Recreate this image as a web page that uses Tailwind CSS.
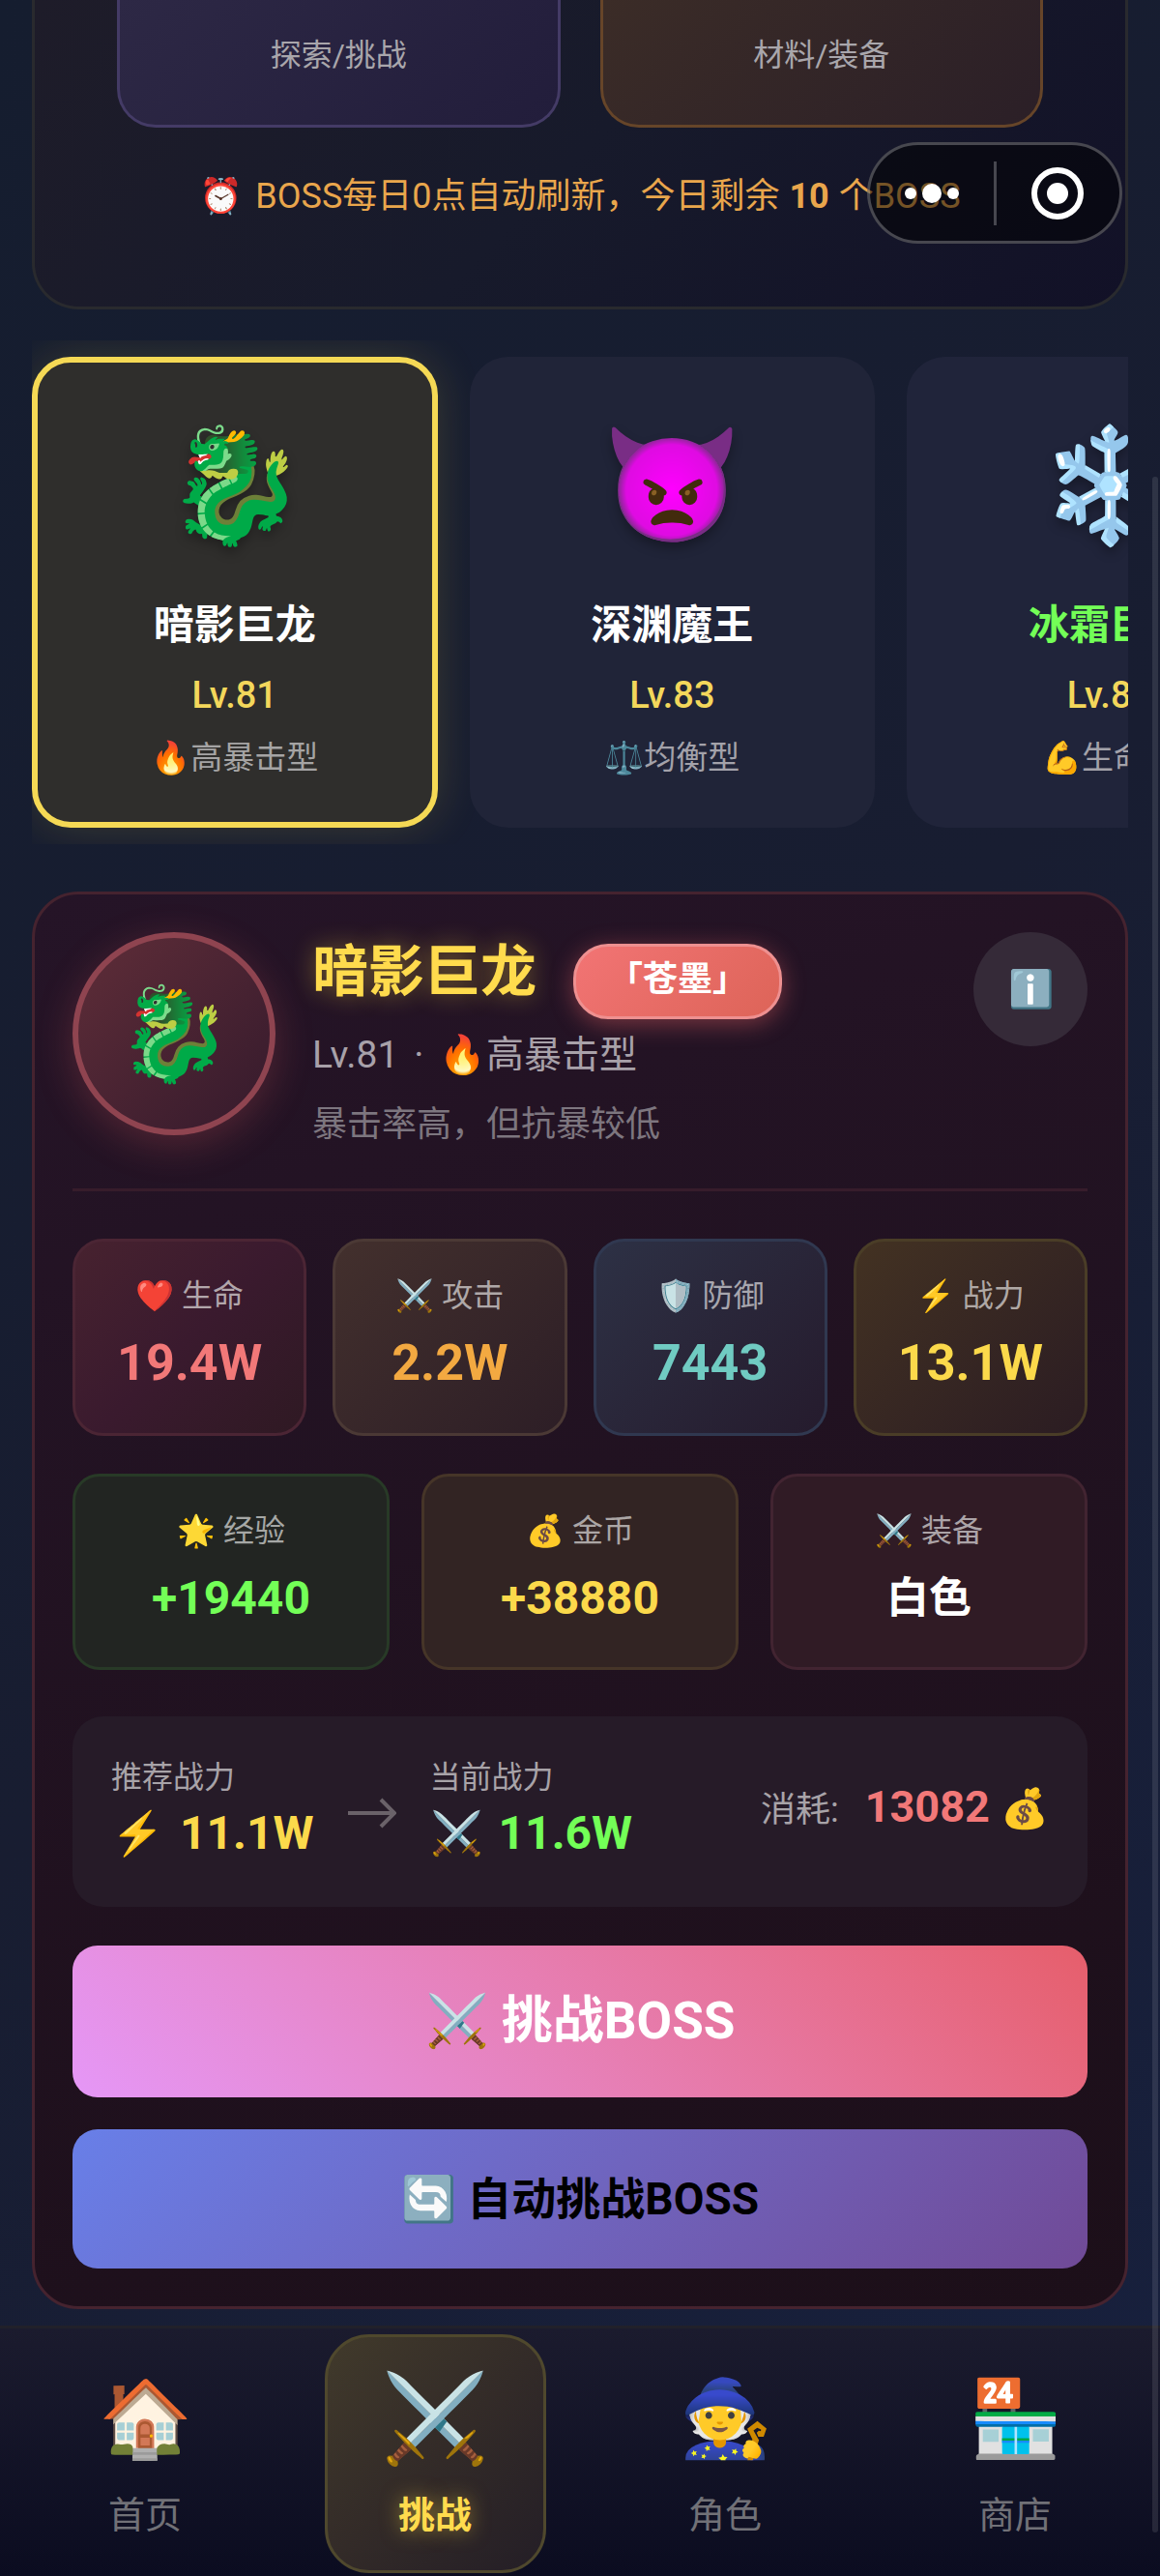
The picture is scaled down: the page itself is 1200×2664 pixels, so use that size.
<!DOCTYPE html>
<html lang="zh-CN">
<head>
  <meta charset="UTF-8">
  <meta name="viewport" content="width=device-width, initial-scale=1">
  <title>挑战BOSS</title>
  <script src="https://cdn.jsdelivr.net/npm/@tailwindcss/browser@4"></script>
</head>
<body class="relative min-h-screen overflow-x-hidden flex flex-col bg-linear-135 from-[#151d2f] via-[#181d31] to-[#17203e] font-['Roboto','Noto_Sans_CJK_SC',sans-serif] text-white">

  <main class="px-[33px]">
    <!-- 每日刷新 -->
    <section class="rounded-b-[48px] border-3 border-t-0 border-[#292a2e] bg-linear-135 from-[#1e1c29] via-[#171a2b] to-[#121127] px-[85px] pb-[89px]">
      <div class="grid grid-cols-2 gap-[41px] text-center text-[32px] leading-[50px] text-[#a9a6ab]">
        <div class="rounded-b-[40px] border-3 border-t-0 border-[#443b66] bg-linear-135 from-[#2d2845] to-[#221d3b] pt-8 pb-[47px]">探索/挑战</div>
        <div class="rounded-b-[40px] border-3 border-t-0 border-[#664529] bg-linear-135 from-[#3b2c27] to-[#2b1f27] pt-8 pb-[47px]">材料/装备</div>
      </div>
      <p class="mt-[46px] whitespace-nowrap text-center text-[36px] leading-[50px] text-[#e9a64c]"><span class="mr-1">⏰</span> BOSS每日0点自动刷新，今日剩余 <b class="mx-px">10</b> 个BOSS</p>
    </section>

    <!-- BOSS 列表 -->
    <section class="mt-8 flex gap-[33px] overflow-hidden py-[17px] text-center">
      <button type="button" class="shrink-0 basis-[37%] rounded-[40px] border-6 border-[#f5d955] bg-[#2f2e2c] pt-[47px] pb-[46px] shadow-[0_0_48px_rgba(255,217,61,0.16)]">
        <span class="block text-[116px] leading-[160px] text-shadow-[0_6px_12px_rgba(0,0,0,0.3)]">🐉</span>
        <span class="mt-[35px] block text-[42px] leading-[60px] font-bold">暗影巨龙</span>
        <span class="mt-[17px] block text-[38px] leading-[50px] font-medium text-[#f3d75b]">Lv.81</span>
        <span class="mt-5 block text-[33px] leading-[40px] text-[#a5a4a4]">🔥高暴击型</span>
      </button>
      <button type="button" class="shrink-0 basis-[37%] rounded-[40px] border-6 border-transparent bg-[#202438] bg-clip-border pt-[47px] pb-[46px]">
        <span class="block text-[116px] leading-[160px] text-shadow-[0_6px_12px_rgba(0,0,0,0.3)]">👿</span>
        <span class="mt-[35px] block text-[42px] leading-[60px] font-bold">深渊魔王</span>
        <span class="mt-[17px] block text-[38px] leading-[50px] font-medium text-[#f3d75b]">Lv.83</span>
        <span class="mt-5 block text-[33px] leading-[40px] text-[#a3a2aa]">⚖️均衡型</span>
      </button>
      <button type="button" class="shrink-0 basis-[37%] rounded-[40px] border-6 border-transparent bg-[#20243a] bg-clip-border pt-[47px] pb-[46px]">
        <span class="block text-[116px] leading-[160px] text-shadow-[0_6px_12px_rgba(0,0,0,0.3)]">❄️</span>
        <span class="mt-[35px] block text-[42px] leading-[60px] font-bold text-[#73ff57]">冰霜巨人</span>
        <span class="mt-[17px] block text-[38px] leading-[50px] font-medium text-[#f3d75b]">Lv.85</span>
        <span class="mt-5 block text-[33px] leading-[40px] text-[#a3a2aa]">💪生命型</span>
      </button>
    </section>

    <!-- BOSS 详情 -->
    <section class="mt-[49px] rounded-[48px] border-3 border-[#45232f] bg-linear-160 from-[#251427] to-[#1c0f19] p-[39px]">
      <header class="flex items-start gap-[38px] border-b-3 border-[#371c2b] pb-[41px]">
        <div class="flex size-[210px] shrink-0 items-center justify-center rounded-full border-6 border-[#8f4450] bg-linear-135 from-[#5f2d38] to-[#351a2c] text-[95px] leading-none shadow-[0_10px_40px_rgba(255,107,107,0.22)]">🐉</div>
        <div class="grow pt-3">
          <div class="flex items-start gap-[38px]">
            <h2 class="text-[58px] leading-[58px] font-bold text-[#ffdb4d] text-shadow-[0_0_24px_rgba(255,217,61,0.4)]">暗影巨龙</h2>
            <span class="rounded-[36px] border-3 border-[#ee9090] bg-linear-135 from-[#f27474] to-[#dd6458] px-[33px] pb-1 text-[36px] leading-[68px] font-bold shadow-[0_5px_24px_rgba(255,107,107,0.4)]">「苍墨」</span>
          </div>
          <p class="mt-3 text-[39px] leading-[50px] text-[#a8a1a9]">Lv.81 <span class="mx-1.5">·</span> 🔥高暴击型</p>
          <p class="mt-[22px] text-[36px] leading-[50px] text-[#7d767f]">暴击率高，但抗暴较低</p>
        </div>
        <button type="button" aria-label="详情" class="size-[118px] shrink-0 rounded-full bg-[#352a38] text-[38px] leading-[118px]">ℹ️</button>
      </header>

      <div class="mt-[49px] grid grid-cols-4 gap-[27px] text-center">
        <div class="rounded-[32px] border-3 border-[#4b2534] bg-linear-135 from-[#47222f] via-[#3a1a2e] to-[#2f1923] pt-9 pb-[42px]">
          <p class="text-[32px] leading-[40px] text-[#b2a6ab]">❤️ 生命</p>
          <p class="mt-5 text-[52px] leading-[60px] font-bold text-[#f27878]">19.4W</p>
        </div>
        <div class="rounded-[32px] border-3 border-[#4b3935] bg-linear-135 from-[#43302d] to-[#2d1e26] pt-9 pb-[42px]">
          <p class="text-[32px] leading-[40px] text-[#afa8a8]">⚔️ 攻击</p>
          <p class="mt-5 text-[52px] leading-[60px] font-bold text-[#f3a941]">2.2W</p>
        </div>
        <div class="rounded-[32px] border-3 border-[#303850] bg-linear-135 from-[#2d3145] to-[#251b2d] pt-9 pb-[42px]">
          <p class="text-[32px] leading-[40px] text-[#a7a6ae]">🛡️ 防御</p>
          <p class="mt-5 text-[52px] leading-[60px] font-bold text-[#70cbc2]">7443</p>
        </div>
        <div class="rounded-[32px] border-3 border-[#4a3d27] bg-linear-135 from-[#433222] to-[#2b1c22] pt-9 pb-[42px]">
          <p class="text-[32px] leading-[40px] text-[#afa8a5]">⚡ 战力</p>
          <p class="mt-5 text-[52px] leading-[60px] font-bold text-[#fbd94b]">13.1W</p>
        </div>
      </div>

      <div class="mt-[39px] grid grid-cols-3 gap-[33px] text-center">
        <div class="rounded-[28px] border-3 border-[#283a27] bg-[#222522] pt-9 pb-[41px]">
          <p class="text-[32px] leading-[40px] text-[#a5a7a5]">🌟 经验</p>
          <p class="mt-5 text-[48px] leading-[60px] font-bold text-[#73ff57]">+19440</p>
        </div>
        <div class="rounded-[28px] border-3 border-[#463528] bg-[#322423] pt-9 pb-[41px]">
          <p class="text-[32px] leading-[40px] text-[#aba6a5]">💰 金币</p>
          <p class="mt-5 text-[48px] leading-[60px] font-bold text-[#fbd94b]">+38880</p>
        </div>
        <div class="rounded-[28px] border-3 border-[#422431] bg-[#301b25] pt-9 pb-[41px]">
          <p class="text-[32px] leading-[40px] text-[#aba3a7]">⚔️ 装备</p>
          <p class="mt-5 text-[44px] leading-[60px] font-bold">白色</p>
        </div>
      </div>

      <div class="mt-12 flex items-center rounded-[32px] bg-[#261b28] px-10 pt-10 pb-[46px]">
        <div>
          <p class="text-[32px] leading-[46px] text-[#a8a3a8]">推荐战力</p>
          <p class="mt-[5px] flex items-center gap-4 text-[48px] leading-[60px] font-bold text-[#fbd94b]"><span class="text-[44px]">⚡</span>11.1W</p>
        </div>
        <svg class="mx-[35px] mt-2 w-[50px] shrink-0" viewBox="0 0 50 32" fill="none" stroke="#6a6269" stroke-width="4"><path d="M0 16H47M34 2L48 16L34 30"/></svg>
        <div>
          <p class="text-[32px] leading-[46px] text-[#a8a3a8]">当前战力</p>
          <p class="mt-[5px] flex items-center gap-4 text-[48px] leading-[60px] font-bold text-[#73ff57]"><span class="text-[44px]">⚔️</span>11.6W</p>
        </div>
        <p class="ml-auto text-[36px] leading-[60px] text-[#a8a3a8]">消耗: <b class="ml-[18px] text-[45px] text-[#f27878]">13082 <span class="text-[40px]">💰</span></b></p>
      </div>

      <button type="button" class="mt-10 block h-[157px] w-full rounded-[26px] bg-linear-45 from-[#e597f7] to-[#e65e6b] text-[53px] font-bold">⚔️ 挑战BOSS</button>
      <button type="button" class="mt-[33px] block h-36 w-full rounded-[26px] bg-linear-135 from-[#687fe8] to-[#704a97] text-[46px] font-bold text-black">🔄 自动挑战BOSS</button>
    </section>
  </main>

  <!-- 底部导航 -->
  <nav class="mt-[17px] grid grid-cols-4 justify-items-center border-t-3 border-[#21212a] bg-linear-to-b from-[#1b1b2e] to-[#0b0c20] pt-[6px] pb-1 text-center text-[38px] leading-[50px] text-[#717177]">
    <a href="#" class="w-[229px] rounded-[46px] border-3 border-transparent pt-[25px] pb-8">
      <span class="block text-[78px] leading-[120px]">🏠</span>
      <span class="mt-[14px] block">首页</span>
    </a>
    <a href="#" aria-current="page" class="w-[229px] rounded-[46px] border-3 border-[#4f482d] bg-linear-135 from-[#413a2b] via-[#332b28] to-[#241e26] pt-[25px] pb-8">
      <span class="block text-[90px] leading-[120px]">⚔️</span>
      <span class="mt-[14px] block font-bold text-[#ffdb4d] text-shadow-[0_0_20px_rgba(255,217,61,0.5)]">挑战</span>
    </a>
    <a href="#" class="w-[229px] rounded-[46px] border-3 border-transparent pt-[25px] pb-8">
      <span class="block text-[78px] leading-[120px]">🧙</span>
      <span class="mt-[14px] block">角色</span>
    </a>
    <a href="#" class="w-[229px] rounded-[46px] border-3 border-transparent pt-[25px] pb-8">
      <span class="block text-[78px] leading-[120px]">🏪</span>
      <span class="mt-[14px] block">商店</span>
    </a>
  </nav>

  <!-- 小程序胶囊按钮 -->
  <div class="absolute top-[147px] right-[39px] flex h-[105px] w-[264px] items-center rounded-full border-3 border-white/25 bg-black/50">
    <button type="button" aria-label="更多" class="flex flex-1 justify-center">
      <svg class="w-[60px]" viewBox="0 0 60 22" fill="#fff"><circle cx="8" cy="11" r="6"/><circle cx="30" cy="11" r="10"/><circle cx="52" cy="11" r="6"/></svg>
    </button>
    <span class="h-[66px] w-[3px] bg-white/25"></span>
    <button type="button" aria-label="关闭" class="flex flex-1 justify-center">
      <svg class="w-[56px]" viewBox="0 0 56 56" fill="none"><circle cx="28" cy="28" r="24" stroke="#fff" stroke-width="6"/><circle cx="28" cy="28" r="11" fill="#fff"/></svg>
    </button>
  </div>

  <!-- 滚动条 -->
  <div class="absolute top-[493px] right-[2px] bottom-[46px] w-[6px] rounded-full bg-white/10"></div>
</body>
</html>
